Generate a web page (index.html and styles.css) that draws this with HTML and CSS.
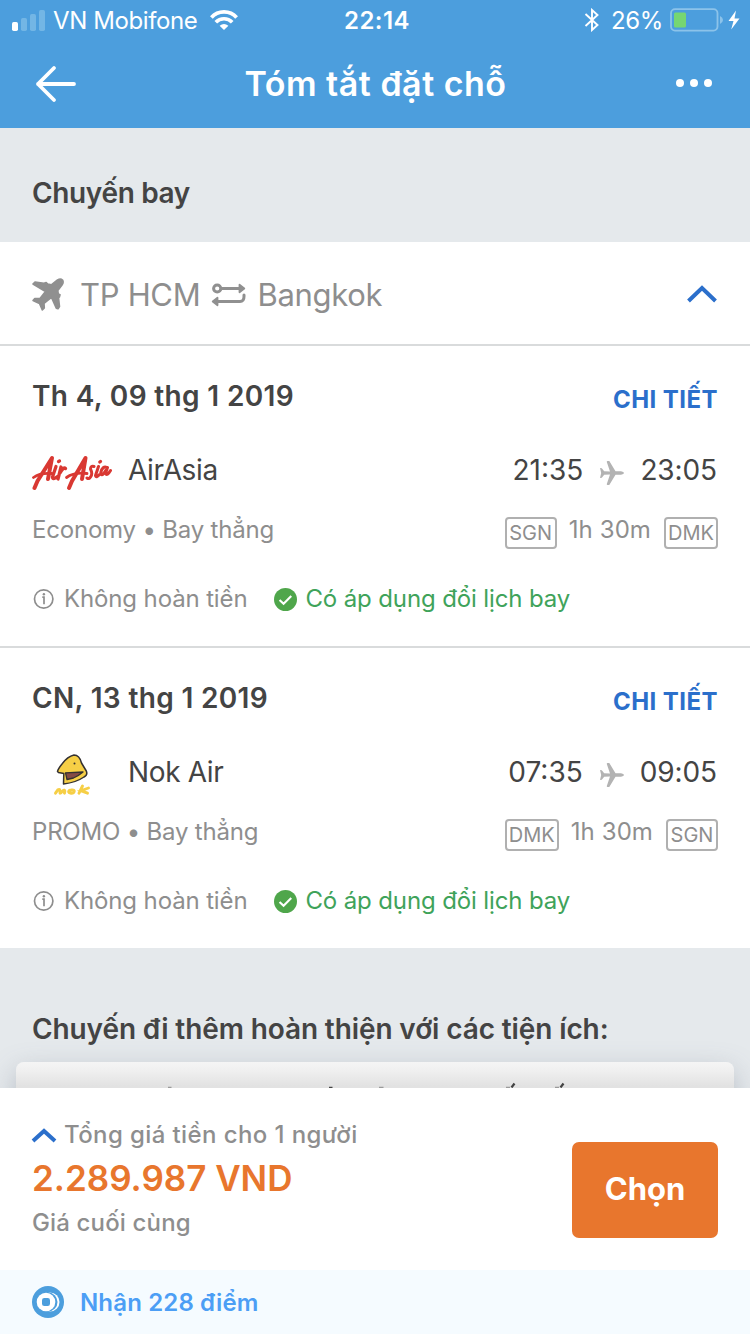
FILE: index.html
```html
<!DOCTYPE html>
<html lang="vi">
<head>
<meta charset="utf-8">
<title>Tóm tắt đặt chỗ</title>
<link rel="stylesheet" href="styles.css">
</head>
<body>
<svg width="0" height="0" class="defs">
  <symbol id="plane" viewBox="0 0 24 24"><path d="M0 7 L1.8 7.3 L4.2 10.3 L10 10.5 L6.8 1 Q6.6 0 7.6 0 H9.3 L15.5 10.3 H21 Q24 10.8 24 12 Q24 13.2 21 13.7 H15.5 L9.3 24 H7.6 Q6.6 24 6.8 23 L10 13.5 L4.2 13.7 L1.8 16.7 L0 17 L1.2 12 Z"/></symbol>
  <symbol id="info" viewBox="0 0 22 22"><circle cx="10.700" cy="11" r="9.200" fill="none" stroke="currentColor" stroke-width="1.700"/><path d="M9.300 9.200 H11 V16.200" fill="none" stroke="currentColor" stroke-width="1.700"/><circle cx="10.900" cy="6.300" r="1.200" fill="currentColor"/></symbol>
  <symbol id="check" viewBox="0 0 24 24"><circle cx="12" cy="12" r="12" fill="#4fa64b"/><path d="M5.800 12.400 L10 16.500 L18 8.400" fill="none" stroke="#fff" stroke-width="2.200"/></symbol>
</svg>
<header class="top">
  <div class="status">
    <div class="carrier">
      <svg class="bars" width="34" height="21" viewBox="0 0 34 21"><rect x="0" y="12" width="6" height="9" rx="1.7" fill="#fff"/><g fill="#73b6e5"><rect x="9" y="8" width="6" height="13" rx="1.7"/><rect x="18" y="4" width="6" height="17" rx="1.7"/><rect x="27" y="0" width="6" height="21" rx="1.7"/></g></svg>
      <span class="t-carrier">VN Mobifone</span>
      <svg class="wifi" width="28" height="20" viewBox="0 0 28 20" fill="none" stroke="#fff" stroke-width="3.7"><path d="M1.400 7.500 C8 0 20 0 26.600 7.500"/><path d="M5.800 12.200 C10.300 7.600 17.700 7.600 22.200 12.200"/><path d="M14 20 L9.600 15.800 Q14 12.300 18.400 15.800 Z" fill="#fff" stroke="none"/></svg>
    </div>
    <div class="clock">22:14</div>
    <div class="power">
      <svg width="16" height="24" viewBox="0 0 16 24" fill="none" stroke="#fff" stroke-width="1.9"><path d="M1.500 6 L13.500 17 L8 22 V2 L13.500 7 L1.500 18"/></svg>
      <span class="t-power">26%</span>
      <svg width="54" height="24" viewBox="0 0 54 24"><rect x="1" y="1.200" width="46.500" height="21.400" rx="4" fill="none" stroke="#8cc3ea" stroke-width="1.800"/><rect x="4" y="4.500" width="12" height="15" rx="1.500" fill="#76d672"/><path d="M50 8 Q53 9.500 53 12 Q53 14.500 50 16 Z" fill="#8cc3ea"/></svg>
      <svg class="bolt" width="12" height="20" viewBox="0 0 12 20"><path d="M8 0.500 L0.500 11 H5.500 L3.200 19.500 L11.500 8.500 H6.500 Z" fill="#fff"/></svg>
    </div>
  </div>
  <div class="nav">
    <svg class="back" width="42" height="38" viewBox="0 0 42 38" fill="none" stroke="#fff" stroke-width="3.800" stroke-linecap="round" stroke-linejoin="round"><path d="M39 19 H3 M19 3 L3 19 L19 35"/></svg>
    <h1>Tóm tắt đặt chỗ</h1>
    <div class="more"><i></i><i></i><i></i></div>
  </div>
</header>
<main>
  <h2 class="section">Chuyến bay</h2>
  <section class="route">
    <svg class="jet" width="34" height="34" viewBox="0 0 34 34" fill="#909090"><path d="M2 6 L4 4 L13 5.300 L15.200 4.500 L16.700 6 L20.300 6.800 L26.500 2 Q29.500 .3 31.500 2 Q33 4.300 31 7 L26.800 12.500 L27.300 16 L29 16.700 L28.400 19 L27.500 19.500 L28.500 28.500 L27 30.800 L25.300 30.300 L20.500 19.500 L13 25.500 L13.300 30 L11.300 32 L8.500 25.500 L2 22.500 L3.800 20.600 L9 20.500 L14.500 13.500 Z" stroke="#909090" stroke-width="1.600" stroke-linejoin="round"/></svg>
    <span class="from">TP HCM</span>
    <svg class="swap" width="36" height="26" viewBox="0 0 36 26" fill="none" stroke="#909090" stroke-width="3" stroke-linecap="round"><circle cx="6.200" cy="6.500" r="3.600"/><path d="M10.500 6.500 H29 M33 13 V14.500 Q33 19.500 29 19.500 H7"/><path d="M28.500 2.700 L33.300 6.500 L28.500 10.300 Z M6.500 15.700 L1.700 19.500 L6.500 23.300 Z" fill="#909090" stroke-width="1.800" stroke-linejoin="round"/></svg>
    <span class="to">Bangkok</span>
    <svg class="chev" width="30" height="18" viewBox="0 0 30 18" fill="none" stroke="#2b6fcb" stroke-width="4"><path d="M1.500 16 L15 3 L28.500 16"/></svg>
  </section>
  <article class="flight">
    <div class="date"><h3>Th 4, 09 thg 1 2019</h3><a class="detail">CHI TIẾT</a></div>
    <div class="line">
      <svg class="logo" width="80" height="36" viewBox="0 0 80 36" fill="none" stroke="#d93832" stroke-width="3.300" stroke-linecap="round" stroke-linejoin="round"><path d="M2.500 33 L5.500 26 L20 3 L16 24" stroke-width="4"/><path d="M1.500 22.500 Q8 17.500 20 18.500" stroke-width="2.800"/><path d="M24 11.500 L20.500 22 Q20.500 25.500 25.500 21.500 M29 12 L26 24 M28 18 Q31.500 11.500 33.500 13.500"/><path d="M37 33 L40 26 L53.500 3 L50 24" stroke-width="4"/><path d="M34.500 22.500 Q42 17 55 18.500" stroke-width="2.800"/><path d="M62 11.500 Q58.500 10.500 58.500 14 Q61 19 58.500 22 Q57 24.500 55 23 M66.500 11.500 L63.500 20.500 Q64 23.500 67.500 19.500 M75 12.500 Q70.500 10.500 68.800 17.500 Q69 22 72.500 17.500 L75.500 12.500 L73.500 18.500 Q75 21.500 78.500 15.500" stroke-width="3"/><path d="M26.500 6.500 L27.500 6 M67.800 7 L68.500 6.500"/></svg>
      <span class="name">AirAsia</span>
      <div class="times"><span class="dep">21:35</span><svg class="fly" width="24" height="24"><use href="#plane"/></svg><span class="arr">23:05</span></div>
    </div>
    <div class="line sub">
      <span class="cabin">Economy • Bay thẳng</span>
      <div class="ports"><b class="port sgn">SGN</b><span class="dur">1h 30m</span><b class="port dmk">DMK</b></div>
    </div>
    <div class="policy"><svg width="22" height="22"><use href="#info"/></svg><span class="norefund">Không hoàn tiền</span><svg class="ok" width="23" height="23"><use href="#check"/></svg><span class="resched">Có áp dụng đổi lịch bay</span></div>
  </article>
  <article class="flight last">
    <div class="date"><h3>CN, 13 thg 1 2019</h3><a class="detail">CHI TIẾT</a></div>
    <div class="line">
      <svg class="logo nok" width="80" height="46" viewBox="0 0 80 46"><path d="M25.500 18.500 Q26 16 30 11 Q35.500 3.500 42 2 Q47.500 2 49.500 10 L54.300 18 Q56 22 52 24 Q44 29.500 31.500 31 L31.800 20.500 L26.500 19.500 Z" fill="#f6cf46" stroke="#343131" stroke-width="1.500" stroke-linejoin="round"/><path d="M33.500 19.800 L51 19 Q47 22.500 41.500 25 L35 26.500 Z" fill="#844a45" stroke="#343131" stroke-width="1.300" stroke-linejoin="round"/><circle cx="42.500" cy="10.500" r="1" fill="#343131"/><path d="M23.500 40.200 L26 36.700 Q28.500 35.200 28 40.200 M29 39.700 Q34 34.200 32.500 40.200 M39.500 37 C44 36.200 42.500 40.400 39 40.200 C35.500 40 36 37.200 39.500 37 M50.500 33 L47 40.200 M56.500 35 L49 37.700 L55.500 40.200" fill="none" stroke="#f6cf46" stroke-width="2.900" stroke-linecap="round"/></svg>
      <span class="name">Nok Air</span>
      <div class="times"><span class="dep">07:35</span><svg class="fly" width="24" height="24"><use href="#plane"/></svg><span class="arr">09:05</span></div>
    </div>
    <div class="line sub">
      <span class="cabin">PROMO • Bay thẳng</span>
      <div class="ports"><b class="port dmk">DMK</b><span class="dur">1h 30m</span><b class="port sgn">SGN</b></div>
    </div>
    <div class="policy"><svg width="22" height="22"><use href="#info"/></svg><span class="norefund">Không hoàn tiền</span><svg class="ok" width="23" height="23"><use href="#check"/></svg><span class="resched">Có áp dụng đổi lịch bay</span></div>
  </article>
  <section class="extras">
    <h2>Chuyến đi thêm hoàn thiện với các tiện ích:</h2>
    <div class="addon"><svg width="718" height="26" viewBox="0 0 718 26" stroke="#444" stroke-width="1.500"><path d="M152 25.500 h3.500 M363 25.500 h4.500 M490 25.500 h4 M539 25.500 h4" opacity=".45"/><path d="M313 25.500 h3.500"/><path d="M495.500 25.500 L498.500 21.500 M544.500 25.500 L547.500 21.500" stroke-width="2.200"/></svg></div>
  </section>
</main>
<footer>
  <div class="total">
    <div class="sum">
      <div class="label"><svg width="26" height="16" viewBox="0 0 26 16" fill="none" stroke="#2b6fcb" stroke-width="4"><path d="M2 14 L13 4 L24 14"/></svg><span>Tổng giá tiền cho 1 người</span></div>
      <div class="price">2.289.987 VND</div>
      <div class="final">Giá cuối cùng</div>
    </div>
    <button>Chọn</button>
  </div>
  <div class="points">
    <svg width="32" height="32" viewBox="0 0 32 32"><circle cx="16" cy="16" r="16" fill="#4c9edd"/><circle cx="18" cy="16" r="9.500" fill="#fff"/><circle cx="15.800" cy="16" r="9.700" fill="#4c9edd"/><circle cx="14" cy="16" r="9.300" fill="#fff"/><rect x="10" y="12" width="8" height="8" rx="2.300" fill="#4c9edd"/></svg>
    <span>Nhận 228 điểm</span>
  </div>
</footer>
</body>
</html>
```
FILE: styles.css
```css
* { box-sizing: border-box; }
body { margin: 0; width: 750px; height: 1334px; overflow: hidden; background: #e5e9ec; font-family: Inter, "Noto Sans", sans-serif; color: #444; display: flex; flex-direction: column; }
svg { display: block; flex: none; }
.defs { position: absolute; }
h1, h2, h3 { margin: 0; font-weight: 600; }
span, h1, h2, h3, a, b { white-space: nowrap; }
.top { height: 128px; background: #4c9edd; color: #fff; flex: none; }
.status { height: 40px; display: grid; grid-template-columns: 1fr auto 1fr; align-items: center; padding: 0 10px 0 12px; font-size: 24px; }
.carrier, .power { display: flex; align-items: center; }
.bars { margin-right: 7px; }
.t-carrier { letter-spacing: -.4px; }
.wifi { margin-left: 13px; }
.clock { font-weight: 600; letter-spacing: .45px; padding-left: 2px; }
.power { justify-content: flex-end; }
.t-power { margin: 0 7px 0 11px; letter-spacing: -.4px; }
.bolt { margin-left: 4px; }
.nav { height: 88px; display: grid; grid-template-columns: 1fr auto 1fr; align-items: center; padding: 0 38px 2px 35px; }
.back { margin-top: 1px; }
.nav h1 { font-size: 34px; letter-spacing: .5px; margin-left: 4px; }
.more { justify-self: end; display: flex; gap: 6px; }
.more i { width: 8px; height: 8px; border-radius: 50%; background: #fff; }
.section { height: 114px; padding: 16px 32px 0; line-height: 98px; font-size: 28px; letter-spacing: -.35px; }
.route { height: 104px; background: #fff; border-bottom: 2px solid #d9dbdc; display: flex; align-items: center; padding: 4px 33px 0 31px; font-size: 31px; letter-spacing: -.3px; color: #8e8e8e; }
.route span { margin-top: -2px; }
.jet { margin-top: -1px; }
.from { margin-left: 15px; }
.swap { margin: 0 10px 0 11px; }
.chev { margin: -2px 0 0 auto; }
.flight { height: 302px; background: #fff; border-bottom: 2px solid #d9dbdc; padding: 22px 32px 0; }
.flight.last { height: 300px; border: 0; }
.date { height: 56px; display: flex; justify-content: space-between; line-height: 56px; }
.date h3 { font-size: 28px; letter-spacing: .34px; }
.detail { font-size: 24px; font-weight: 700; color: #2b6fcb; line-height: 64px; letter-spacing: .45px; }
.line { height: 92px; display: flex; align-items: center; font-size: 28px; }
.logo { margin: 6px 16px 0 0; }
.logo.nok { margin-top: 8px; }
.name { letter-spacing: -.35px; }
.times { margin-left: auto; display: flex; align-items: center; }
.arr { margin-right: 1px; letter-spacing: -.1px; }
.fly { fill: #b3b3b3; margin: 6px 16px 0 17px; }
.sub { height: 28px; font-size: 24px; color: #8e8e8e; }
.cabin { letter-spacing: -.2px; margin-top: -1px; }
.ports { margin-left: auto; display: flex; align-items: center; }
.port { height: 32px; margin-top: 6px; border: 2px solid #b0b0b0; border-radius: 4px; font-weight: 400; font-size: 20px; line-height: 29px; text-align: center; }
.sgn { width: 52px; }
.dmk { width: 54px; }
.dur { margin: -1px 13px 0 12px; letter-spacing: .1px; }
.policy { display: flex; align-items: center; margin-top: 40px; height: 30px; font-size: 24px; color: #8e8e8e; padding-left: 1px; }
.norefund { margin: -1px 0 0 9px; letter-spacing: -.13px; }
.ok { margin-left: 27px; }
.resched { margin: -1px 0 0 8px; color: #3fa35a; letter-spacing: -.13px; }
.extras { height: 140px; overflow: hidden; }
.extras h2 { height: 114px; padding: 32px 32px 0; line-height: 98px; font-size: 28px; letter-spacing: -.11px; }
.addon { margin: 0 16px; height: 80px; border-radius: 8px; background: linear-gradient(#f5f5f5 0, #f0f0f0 8px, #e2e2e2 24px); box-shadow: 0 10px 28px rgba(90, 100, 120, .36); }
footer { position: relative; background: #fff; }
.total { height: 182px; padding: 0 32px; display: flex; justify-content: space-between; align-items: center; }
.label { display: flex; align-items: center; gap: 7px; margin-left: -1px; height: 44px; font-size: 24px; font-weight: 500; color: #8e8e8e; letter-spacing: .4px; }
.label span { margin-top: -2px; }
.price { font-size: 35px; font-weight: 600; color: #e8762d; line-height: 43px; letter-spacing: 0; }
.final { font-size: 24px; font-weight: 500; color: #8e8e8e; line-height: 45px; letter-spacing: .15px; }
button { width: 146px; height: 96px; margin-top: 22px; padding: 0 0 3px; border: 0; border-radius: 7px; background: #e8762d; color: #fff; font: 700 31px Inter, sans-serif; }
.points { height: 64px; background: #f5fbff; display: flex; align-items: center; gap: 16px; padding: 0 32px; font-size: 24px; font-weight: 600; color: #4c9ef5; letter-spacing: .15px; }
```
